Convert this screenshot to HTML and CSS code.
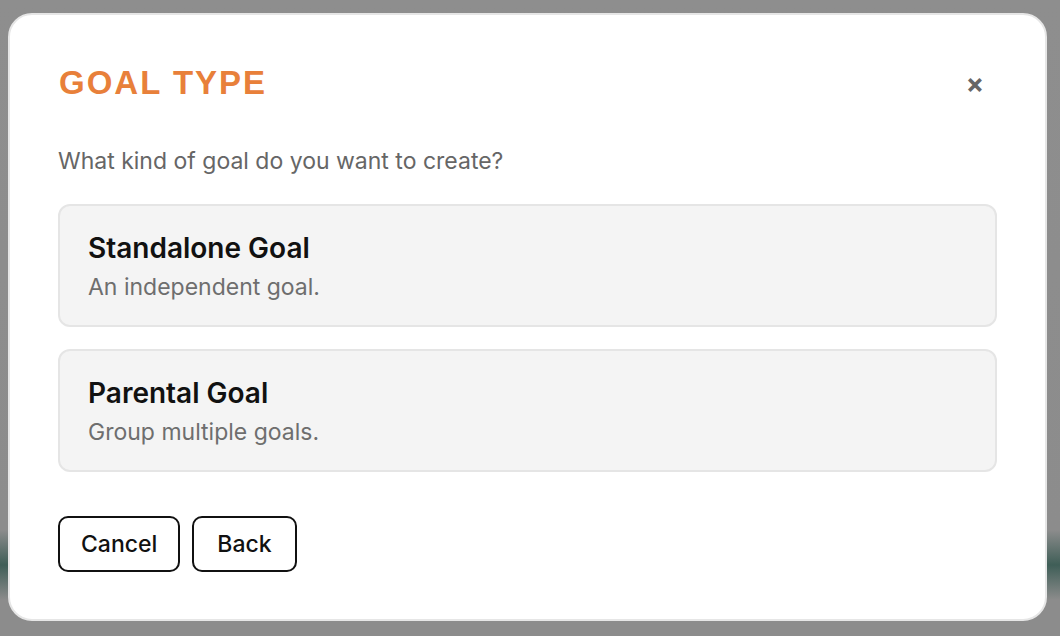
FILE: index.html
```html
<!DOCTYPE html>
<html lang="en">
<head>
    <meta charset="UTF-8">
    <meta name="viewport" content="width=device-width, initial-scale=1.0">
    <title>Goal Type</title>
    <link rel="stylesheet" href="styles.css">
</head>
<body>
    <div class="backdrop">
        <div class="modal">
            <div class="modal-header">
                <h1 class="modal-title">GOAL TYPE</h1>
                <span class="close">&times;</span>
            </div>
            <p class="question">What kind of goal do you want to create?</p>
            <div class="options">
                <div class="option">
                    <h2>Standalone Goal</h2>
                    <p>An independent goal.</p>
                </div>
                <div class="option">
                    <h2>Parental Goal</h2>
                    <p>Group multiple goals.</p>
                </div>
            </div>
            <div class="actions">
                <button class="btn">Cancel</button>
                <button class="btn btn-back">Back</button>
            </div>
        </div>
    </div>
</body>
</html>
```

FILE: styles.css
```css
body {
    margin: 0;
    padding: 0;
    font-family: Inter, "Noto Sans", sans-serif;
    background-color: #8c8c8c;
}
.backdrop {
    height: 636px;
    overflow: hidden;
    background: linear-gradient(to bottom, #8e8e8e 0, #8c8c8c 530px, #3f5e57 565px, #8c8c8c 600px);
}
.modal {
    box-sizing: border-box;
    width: 1039px;
    height: 608px;
    margin: 13px 0 0 8px;
    padding: 50px 48px 49px 48px;
    background-color: #fff;
    border: 2px solid #e6e6e6;
    border-radius: 24px;
    display: flex;
    flex-direction: column;
}
.modal-header {
    display: flex;
    justify-content: space-between;
    align-items: center;
}
.modal-title {
    margin: 0 0 0 1px;
    color: #e8803a;
    font-family: "Liberation Sans", Arial, sans-serif;
    font-size: 33px;
    line-height: 36px;
    letter-spacing: 2px;
    font-weight: bold;
}
.close {
    color: #666;
    font-size: 27px;
    font-weight: bold;
    line-height: 30px;
    margin: 2px 13px 0 0;
}
.question {
    margin: 46px 0 29px 0;
    color: #666;
    font-size: 23px;
    line-height: 28px;
}
.options {
    display: flex;
    flex-direction: column;
    gap: 22px;
}
.option {
    background-color: #f4f4f4;
    border: 2px solid #e5e5e5;
    border-radius: 12px;
    padding: 26px 28px 23px 28px;
}
.option h2 {
    margin: 0;
    font-size: 28px;
    line-height: 32px;
    font-weight: 600;
    color: #111;
}
.option p {
    margin: 9px 0 0 0;
    font-size: 23px;
    line-height: 29px;
    color: #6e6e6e;
}
.actions {
    margin-top: 44px;
    display: flex;
    gap: 12px;
}
.btn {
    font-family: Inter, "Noto Sans", sans-serif;
    font-size: 23px;
    font-weight: 500;
    color: #111;
    background-color: #fff;
    border: 2px solid #111;
    border-radius: 10px;
    height: 56px;
    padding: 0 21px;
}
.btn-back {
    padding: 0 23px;
}
```
